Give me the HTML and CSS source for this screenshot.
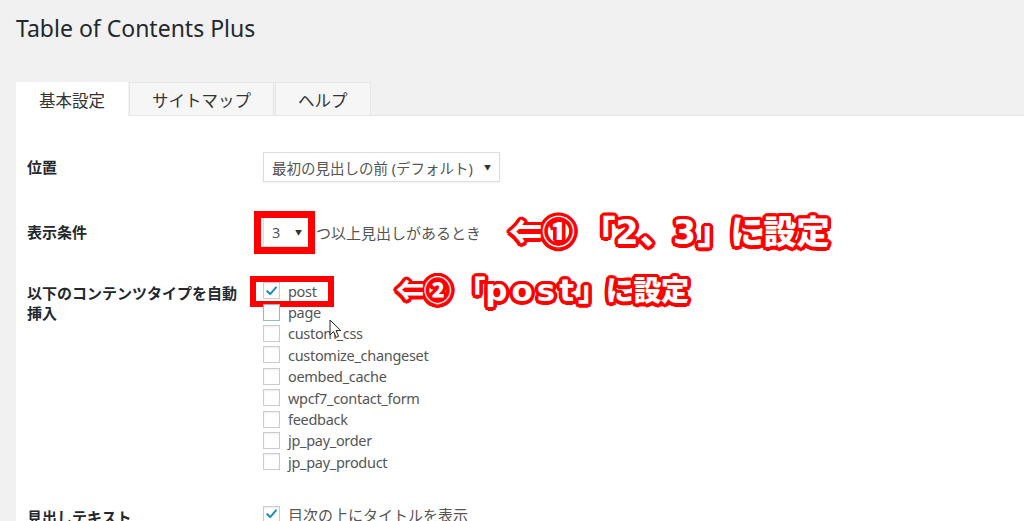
FILE: index.html
```html
<!DOCTYPE html>
<html lang="ja">
<head>
    <meta charset="UTF-8">
    <meta name="viewport" content="width=device-width, initial-scale=1.0">
    <title>Table of Contents Plus</title>
    <link rel="stylesheet" href="styles.css">
</head>
<body>

<div class="wrap">
    <h1>Table of Contents Plus</h1>

    <div class="tabs">
        <span class="tab active">基本設定</span>
        <span class="tab">サイトマップ</span>
        <span class="tab">ヘルプ</span>
        <span class="tab-rest"></span>
    </div>

    <div class="panel">

        <div class="row row-position">
            <div class="label">位置</div>
            <div class="field">
                <span class="select select-wide">最初の見出しの前 (デフォルト)<span class="caret">▼</span></span>
            </div>
        </div>

        <div class="row row-count">
            <div class="label">表示条件</div>
            <div class="field">
                <span class="select select-small marked">3<span class="caret">▼</span></span>
                <span class="after-text">つ以上見出しがあるとき</span>
                <span class="note note-one">⇐① 「<span class="latin">2</span>、<span class="latin">3</span>」に設定</span>
            </div>
        </div>

        <div class="row row-types">
            <div class="label">以下のコンテンツタイプを自動挿入</div>
            <div class="field">
                <ul class="checks">
                    <li class="marked-item">
                        <span class="box checked"><svg viewBox="0 0 16 16" width="16" height="16"><path d="M3.5 8.2 L6.6 11.3 L12.8 4.2" fill="none" stroke="#1e8cbe" stroke-width="2.2" stroke-linecap="round" stroke-linejoin="round"/></svg></span>post
                        <span class="note note-two">⇐② 「<span class="latin">post</span>」に設定</span>
                    </li>
                    <li><span class="box box-focus"></span>page</li>
                    <li><span class="box"></span>custom_css</li>
                    <li><span class="box"></span>customize_changeset</li>
                    <li><span class="box"></span>oembed_cache</li>
                    <li><span class="box"></span>wpcf7_contact_form</li>
                    <li><span class="box"></span>feedback</li>
                    <li><span class="box"></span>jp_pay_order</li>
                    <li><span class="box"></span>jp_pay_product</li>
                </ul>
                <svg class="cursor" viewBox="0 0 13 20" width="13" height="20">
                    <path d="M1 1 L1 16 L4.6 12.6 L7.2 18.4 L9.6 17.3 L7 11.6 L11.8 11.6 Z" fill="#fff" stroke="#222" stroke-width="1" stroke-linejoin="round"/>
                </svg>
            </div>
        </div>

        <div class="row row-heading">
            <div class="label">見出しテキスト</div>
            <div class="field">
                <ul class="checks">
                    <li class="ja">
                        <span class="box checked"><svg viewBox="0 0 16 16" width="16" height="16"><path d="M3.5 8.2 L6.6 11.3 L12.8 4.2" fill="none" stroke="#1e8cbe" stroke-width="2.2" stroke-linecap="round" stroke-linejoin="round"/></svg></span>目次の上にタイトルを表示
                    </li>
                </ul>
            </div>
        </div>

    </div>
</div>

</body>
</html>
```

FILE: styles.css
```css
*, *::before, *::after {
    box-sizing: border-box;
}
html, body {
    margin: 0;
    height: 100%;
    overflow: hidden;
}
body {
    background-color: #f1f1f1;
    color: #444;
    font-family: "Noto Sans", "Noto Sans CJK JP", sans-serif;
    font-size: 15px;
}
.wrap {
    padding-left: 16px;
}
h1 {
    margin: 0;
    padding-top: 12px;
    font-size: 23px;
    font-weight: 400;
    line-height: 32px;
    color: #23282d;
}

/* tabs */
.tabs {
    display: flex;
    margin-top: 38px;
    height: 34px;
}
.tab {
    display: block;
    height: 34px;
    padding: 0 22px;
    margin-right: 1px;
    font-family: "Noto Sans CJK JP", sans-serif;
    font-size: 16.5px;
    line-height: 34px;
    color: #333;
    background-color: #f6f6f6;
    border: 1px solid #e6e6e6;
}
.tab.active {
    background-color: #fff;
    border-color: #fff;
}
.tab-rest {
    flex: 1;
    border-bottom: 1px solid #e6e6e6;
}

/* panel */
.panel {
    background-color: #fff;
    padding: 36px 0 40px 11px;
    min-height: 500px;
}
.row {
    display: flex;
}
.label {
    width: 236px;
    padding-right: 20px;
    font-family: "Noto Sans CJK JP", sans-serif;
    font-weight: 700;
    color: #23282d;
    line-height: 20px;
}
.field {
    flex: 1;
    position: relative;
}
.row-position .label,
.row-count .label {
    line-height: 30px;
}
.row-count {
    margin-top: 35px;
}
.row-count .field {
    display: flex;
    align-items: center;
    height: 30px;
}
.row-types {
    margin-top: 33px;
}
.row-types .label {
    padding-top: 3px;
}
.row-heading {
    margin-top: 31px;
}
.row-heading .label {
    padding-top: 3px;
}

/* selects */
.select {
    display: inline-flex;
    align-items: center;
    justify-content: space-between;
    height: 30px;
    padding: 0 8px;
    border: 1px solid #ddd;
    background-color: #fff;
    color: #555;
    font-family: "Noto Sans", "Noto Sans CJK JP", sans-serif;
    font-size: 14.5px;
    vertical-align: middle;
    box-shadow: 0 1px 2px rgba(0, 0, 0, 0.05);
}
.select-wide {
    width: 237px;
}
.select-small {
    width: 48px;
    flex: none;
}
.caret {
    font-size: 7px;
    color: #333;
}
.marked {
    position: relative;
}
.marked::after {
    content: "";
    position: absolute;
    left: -10px;
    top: -7px;
    width: 61px;
    height: 43px;
    border: 7px solid #ff0000;
}
.after-text {
    margin-left: 5px;
    color: #555;
    font-family: "Noto Sans CJK JP", sans-serif;
}

/* annotations */
.note {
    font-family: "Noto Sans CJK JP", sans-serif;
    font-weight: 900;
    color: #fff;
    white-space: nowrap;
    text-shadow:
        3.5px 0 0 #f00, -3.5px 0 0 #f00, 0 3.5px 0 #f00, 0 -3.5px 0 #f00,
        2.5px 2.5px 0 #f00, -2.5px 2.5px 0 #f00, 2.5px -2.5px 0 #f00, -2.5px -2.5px 0 #f00,
        3.2px 1.3px 0 #f00, -3.2px 1.3px 0 #f00, 3.2px -1.3px 0 #f00, -3.2px -1.3px 0 #f00,
        1.3px 3.2px 0 #f00, -1.3px 3.2px 0 #f00, 1.3px -3.2px 0 #f00, -1.3px -3.2px 0 #f00;
}
.note .latin {
    font-family: "DejaVu Sans", sans-serif;
    font-weight: 700;
    letter-spacing: 1.5px;
}
.note-one {
    margin-left: 28px;
    font-size: 33px;
    line-height: 30px;
    margin-top: -2px;
}
.note-two {
    position: absolute;
    left: 133px;
    top: -8px;
    font-size: 28px;
    line-height: 34px;
}
.note-two .latin {
    font-size: 31px;
    letter-spacing: 4px;
}

/* checkbox list */
.checks {
    list-style: none;
    margin: 0;
    padding: 0;
}
.checks li {
    display: flex;
    align-items: center;
    height: 21.4px;
    color: #555;
    font-size: 14.5px;
    letter-spacing: -0.3px;
    position: relative;
}
.checks li.ja {
    font-size: 15px;
    letter-spacing: 0;
}
.box {
    display: inline-flex;
    align-items: center;
    justify-content: center;
    width: 17px;
    height: 17px;
    margin-right: 8px;
    border: 1px solid #c9cdd1;
    background-color: #fff;
    box-shadow: inset 0 1px 2px rgba(0, 0, 0, 0.08);
}
.box-focus {
    border-color: #9ab4d4;
}
.marked-item::after {
    content: "";
    position: absolute;
    left: -13px;
    top: -4px;
    width: 84px;
    height: 31px;
    border: 6px solid #ff0000;
}
.cursor {
    position: absolute;
    left: 66px;
    top: 39px;
}
```
